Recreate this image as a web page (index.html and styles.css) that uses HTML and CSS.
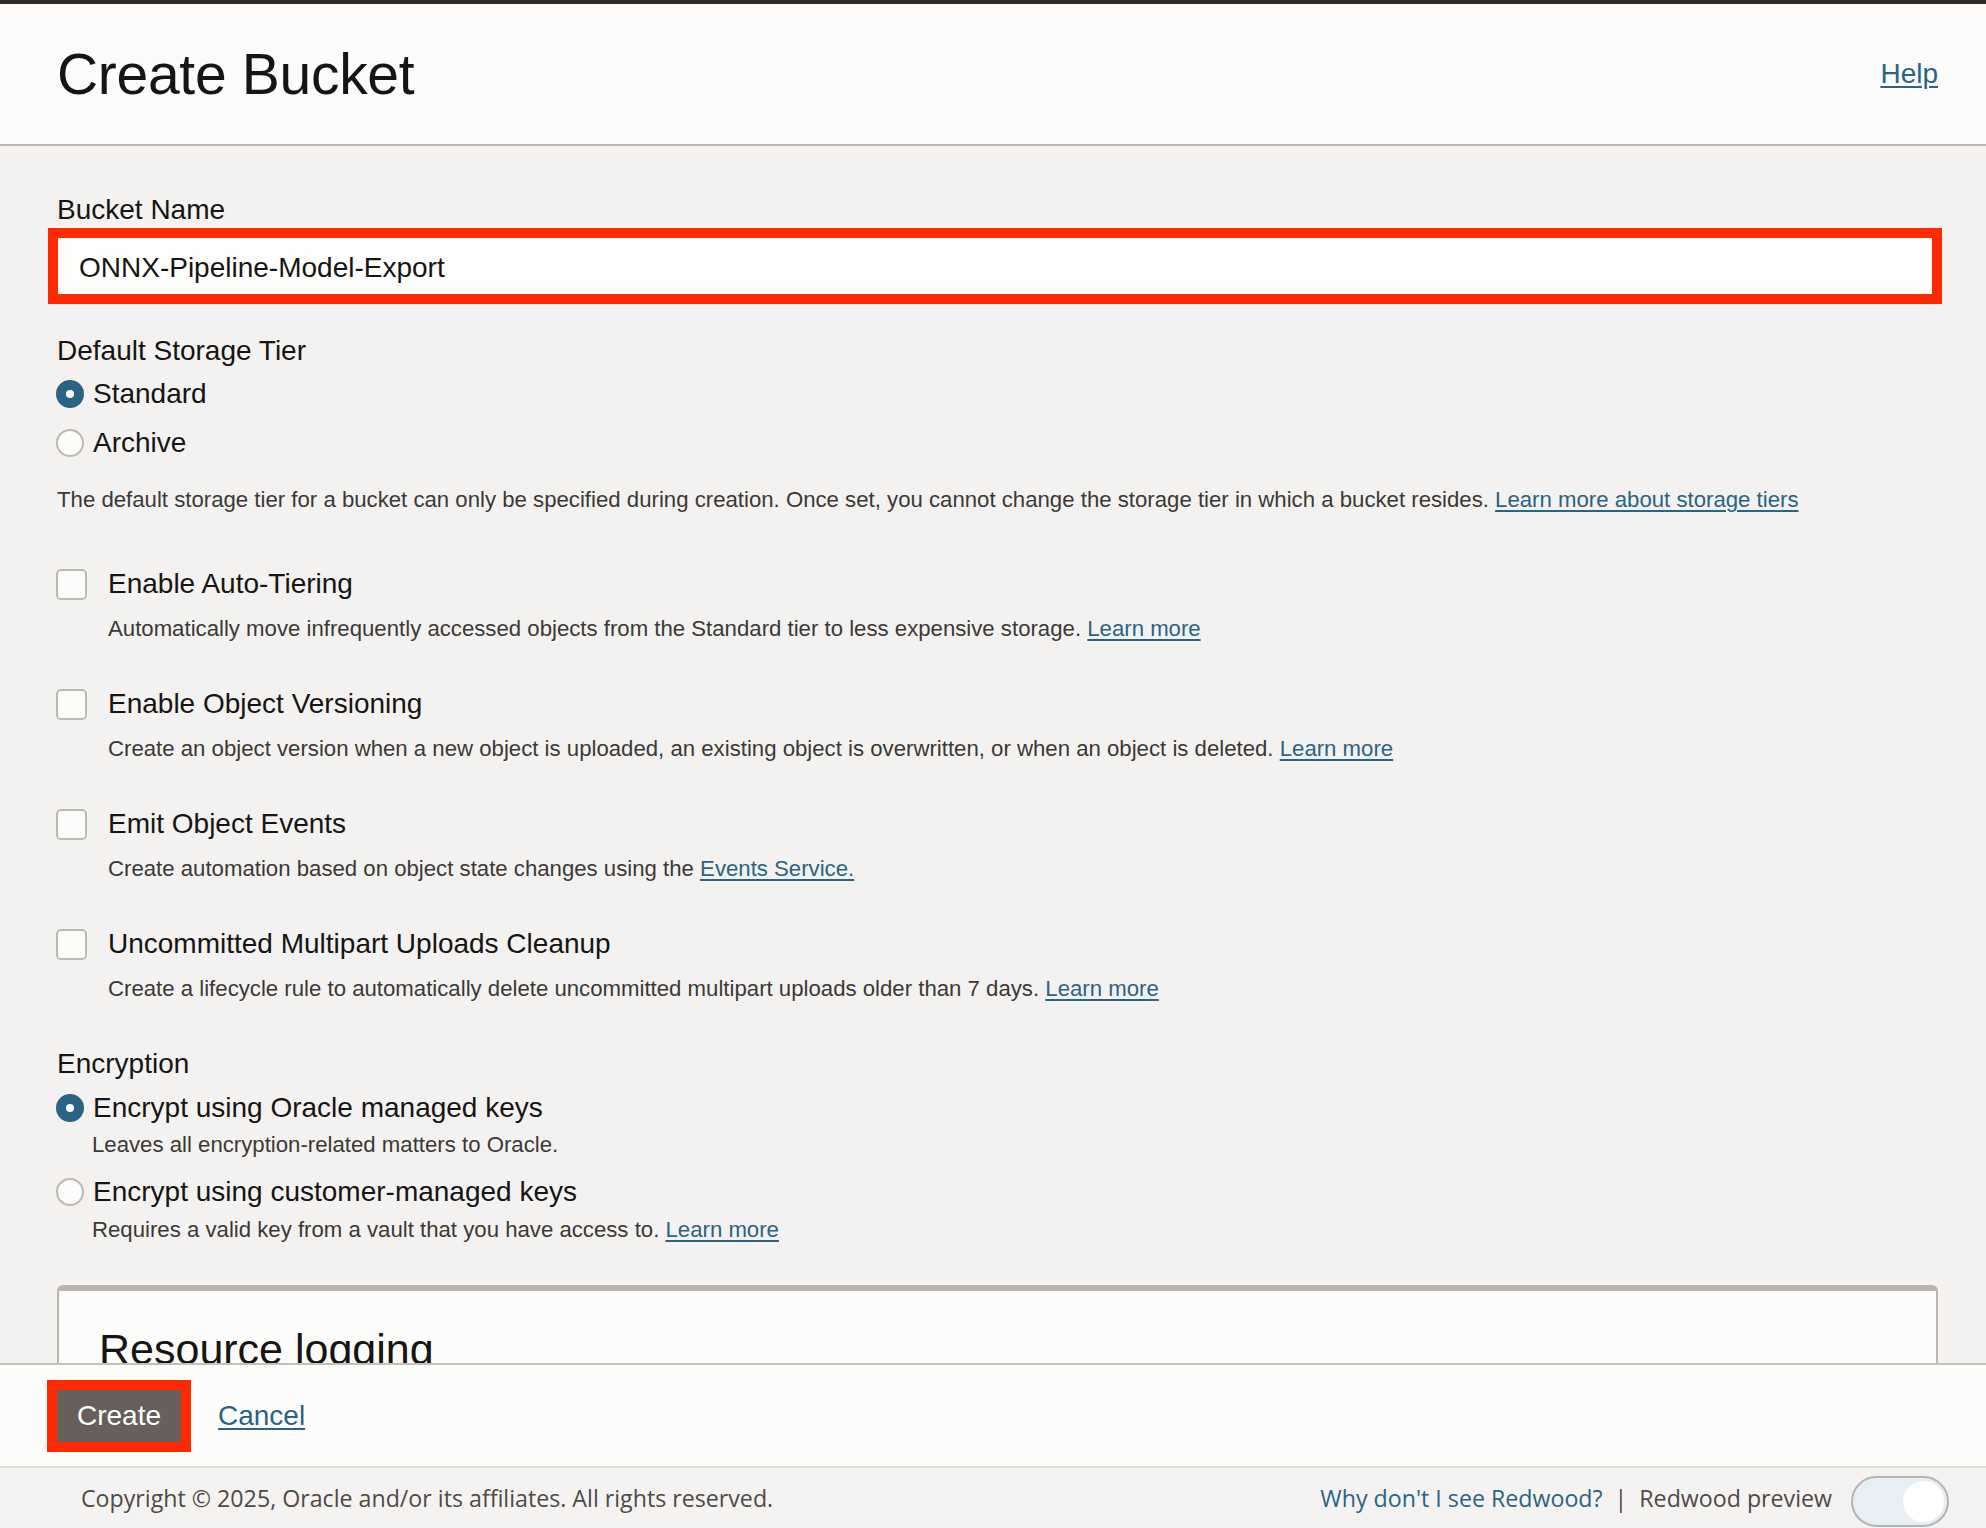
FILE: index.html
```html
<!DOCTYPE html>
<html lang="en">
<head>
<meta charset="utf-8">
<title>Create Bucket</title>
<link rel="stylesheet" href="styles.css">
</head>
<body>
<div class="app">
  <div class="topbar"></div>
  <header class="header">
    <h1 class="title">Create Bucket</h1>
    <a class="link help" href="#">Help</a>
  </header>
  <main class="content">
    <div class="label">Bucket Name</div>
    <div class="input">ONNX-Pipeline-Model-Export</div>

    <div class="label section-label">Default Storage Tier</div>
    <div class="radios">
      <div class="radio-row"><span class="radio checked"></span><span>Standard</span></div>
      <div class="radio-row"><span class="radio"></span><span>Archive</span></div>
    </div>
    <p class="desc tier-desc">The default storage tier for a bucket can only be specified during creation. Once set, you cannot change the storage tier in which a bucket resides. <a class="link" href="#">Learn more about storage tiers</a></p>

    <div class="checks">
      <div class="check-item">
        <div class="check-row"><span class="checkbox"></span><span>Enable Auto-Tiering</span></div>
        <p class="desc check-desc">Automatically move infrequently accessed objects from the Standard tier to less expensive storage. <a class="link" href="#">Learn more</a></p>
      </div>
      <div class="check-item">
        <div class="check-row"><span class="checkbox"></span><span>Enable Object Versioning</span></div>
        <p class="desc check-desc">Create an object version when a new object is uploaded, an existing object is overwritten, or when an object is deleted. <a class="link" href="#">Learn more</a></p>
      </div>
      <div class="check-item">
        <div class="check-row"><span class="checkbox"></span><span>Emit Object Events</span></div>
        <p class="desc check-desc">Create automation based on object state changes using the <a class="link" href="#">Events Service.</a></p>
      </div>
      <div class="check-item">
        <div class="check-row"><span class="checkbox"></span><span>Uncommitted Multipart Uploads Cleanup</span></div>
        <p class="desc check-desc">Create a lifecycle rule to automatically delete uncommitted multipart uploads older than 7 days. <a class="link" href="#">Learn more</a></p>
      </div>
    </div>

    <div class="label enc-label">Encryption</div>
    <div class="radio-row enc-first"><span class="radio checked"></span><span>Encrypt using Oracle managed keys</span></div>
    <p class="desc radio-desc first-desc">Leaves all encryption-related matters to Oracle.</p>
    <div class="radio-row enc-second"><span class="radio"></span><span>Encrypt using customer-managed keys</span></div>
    <p class="desc radio-desc second-desc">Requires a valid key from a vault that you have access to. <a class="link" href="#">Learn more</a></p>

    <section class="panel">
      <h2 class="panel-title">Resource logging</h2>
    </section>
  </main>
  <div class="actions">
    <button class="btn-create" type="button">Create</button>
    <a class="link cancel" href="#">Cancel</a>
  </div>
  <footer class="footer">
    <span class="copyright">Copyright © 2025, Oracle and/or its affiliates. All rights reserved.</span>
    <div class="footer-right">
      <a class="footer-link" href="#">Why don't I see Redwood?</a>
      <span class="sep">|</span>
      <span class="preview">Redwood preview</span>
      <span class="toggle"><span class="knob"></span></span>
    </div>
  </footer>
</div>
</body>
</html>
```
FILE: styles.css
```css
* { box-sizing: border-box; }
html, body { margin: 0; padding: 0; }
body {
  width: 1986px;
  height: 1528px;
  overflow: hidden;
  font-family: "Liberation Sans", Arial, sans-serif;
  color: #161513;
  background: #f3f2f1;
}
.app { display: flex; flex-direction: column; height: 1528px; }
.topbar { flex: none; height: 4px; background: #312d2a; }
.header {
  flex: none;
  height: 142px;
  background: #fcfbfa;
  border-bottom: 2px solid #bcb6b1;
  display: flex;
  align-items: center;
  justify-content: space-between;
  padding: 0 48px 0 57px;
}
.title { margin: 0; font-size: 57px; font-weight: 400; line-height: 1; letter-spacing: -0.3px; }
.link {
  color: #2a6485;
  text-decoration: underline;
  text-decoration-thickness: 2px;
  text-underline-offset: 3px;
}
.help { font-size: 28px; }

.content {
  flex: 1;
  overflow: hidden;
  padding: 46px 48px 0 57px;
}
.label { font-size: 28px; line-height: 36px; }
.input {
  height: 76px;
  margin: 0 -4px 0 -9px;
  border: 10px solid #ff2a00;
  background: #fefefd;
  padding: 3px 0 0 21px;
  font-size: 28px;
  display: flex;
  align-items: center;
}
.section-label { margin-top: 29px; }
.radios { margin-top: 5px; display: flex; flex-direction: column; gap: 9px; }
.radio-row {
  height: 40px;
  display: flex;
  align-items: center;
  gap: 9px;
  font-size: 28px;
  margin-left: -1px;
}
.radio {
  width: 28px;
  height: 28px;
  border-radius: 50%;
  border: 2px solid #bdb8b3;
  background: #fcfcfb;
  flex: none;
  display: flex;
  align-items: center;
  justify-content: center;
}
.radio.checked { background: #2a6485; border-color: #2a6485; }
.radio.checked::after {
  content: "";
  width: 8px;
  height: 8px;
  border-radius: 50%;
  background: #ffffff;
}
.desc {
  margin: 0;
  font-size: 22.2px;
  line-height: 32px;
  color: #3c3935;
}
.tier-desc { margin-top: 21px; }
.checks { margin-top: 48px; display: flex; flex-direction: column; gap: 39px; }
.check-row {
  height: 40px;
  display: flex;
  align-items: center;
  gap: 21px;
  font-size: 28px;
  margin-left: -1px;
}
.checkbox {
  width: 31px;
  height: 31px;
  border: 2px solid #bdb8b3;
  border-radius: 5px;
  background: #fcfcfb;
  flex: none;
}
.check-desc { margin-top: 9px; padding-left: 51px; }
.enc-label { margin-top: 41px; }
.enc-first { margin-top: 6px; }
.radio-desc { padding-left: 35px; }
.first-desc { margin-top: 1px; }
.enc-second { margin-top: 11px; }
.second-desc { margin-top: 2px; }

.panel {
  margin-top: 39px;
  min-height: 200px;
  background: #fcfcfb;
  border-top: 6px solid #bab5b0;
  border-left: 2px solid #bab5b0;
  border-right: 2px solid #bab5b0;
  border-radius: 6px 6px 0 0;
  padding: 33px 40px;
}
.panel-title { margin: 0; font-size: 43px; font-weight: 400; line-height: 1.2; }

.actions {
  flex: none;
  height: 105px;
  background: #fcfcfb;
  border-top: 2px solid #c4bfba;
  border-bottom: 2px solid #dedbd8;
  display: flex;
  align-items: center;
  gap: 27px;
  padding-left: 47px;
}
.btn-create {
  width: 144px;
  height: 72px;
  border: 10px solid #ff2a00;
  background: #665f5b;
  color: #ffffff;
  font-family: "Liberation Sans", Arial, sans-serif;
  font-size: 28px;
  padding: 0;
  margin: 0;
}
.cancel { font-size: 28px; }

.footer {
  flex: none;
  height: 60px;
  background: #f4f3f2;
  display: flex;
  align-items: center;
  justify-content: space-between;
  padding: 0 37px 0 81px;
  font-family: "Open Sans", "Noto Sans", sans-serif;
  font-size: 23.2px;
}
.copyright { color: #4f4a46; }
.footer-right { display: flex; align-items: center; }
.footer-link { color: #2a6485; text-decoration: none; }
.sep { color: #4f4a46; margin: 0 12px; }
.preview { color: #4f4a46; }
.toggle {
  margin-left: 19px;
  width: 98px;
  height: 51px;
  border-radius: 26px;
  border: 2px solid #b8b3ae;
  background: #e6eff3;
  display: flex;
  align-items: center;
  justify-content: flex-end;
  padding-right: 3px;
  position: relative;
  top: 3px;
}
.knob {
  width: 41px;
  height: 41px;
  border-radius: 50%;
  background: #ffffff;
}
```
